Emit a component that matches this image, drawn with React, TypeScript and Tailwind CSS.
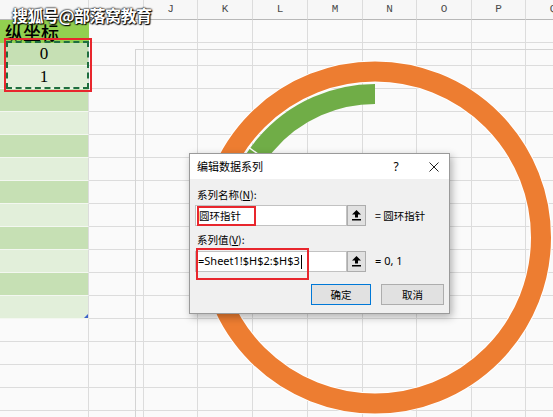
import React from "react";

const LETTERS = ["", "", "J", "K", "L", "M", "N", "O", "P", "Q"];

function UploadIcon() {
  return (
    <svg width="9" height="11" viewBox="0 0 9 11">
      <path d="M4.5 0 L9 4.5 H6 V7.5 H3 V4.5 H0 Z" fill="#000" />
      <rect x="0" y="9" width="9" height="1.5" fill="#000" />
    </svg>
  );
}

function greenClass(k: number) {
  if (k === 0) return "bg-[#92d050] border-r border-b border-[#92d050]";
  if (k > 12) return "border-r border-b border-[#dcdcdc]";
  return k % 2 === 1
    ? "bg-[#c6e0b4] border-r border-b border-r-[#dcdcdc] border-b-[#f3f7f0]"
    : "bg-[#e2efda] border-r border-b border-r-[#dcdcdc] border-b-[#f3f7f0]";
}

export default function App() {
  const rows = Array.from({ length: 18 }, (_, i) => i);
  const cx = 375;
  const cy = 237.5;
  const rg = 143.5;
  const a = (100 * Math.PI) / 180;
  const ex = cx - rg * Math.sin(a);
  const ey = cy - rg * Math.cos(a);
  const s = (54.5 * Math.PI) / 180;
  return (
    <div className="relative w-[553px] h-[417px] overflow-hidden bg-[#fafafa] font-['Noto_Sans','Noto_Sans_CJK_SC',sans-serif]">
      <div className="grid w-[581px] grid-cols-[89px_55px_54px_55px_55px_55px_54px_55px_54px_55px]">
        {LETTERS.map((l, i) => (
          <div
            key={"h" + i}
            className="h-[20px] border-r border-b border-r-[#dcdcdc] border-b-[#b8b8b8] bg-[#f7f7f7] flex items-center justify-center text-[11px] text-[#4a4a4a] font-['Liberation_Mono',monospace]"
          >
            {l}
          </div>
        ))}
        {rows.map((k) =>
          LETTERS.map((_, i) => (
            <div
              key={k + "-" + i}
              className={
                i === 0
                  ? "h-[23px] flex items-end justify-center " + greenClass(k)
                  : "h-[23px] border-r border-b border-[#dcdcdc]"
              }
            >
              {i === 0 && k === 0 && (
                <span className="w-full pl-[5px] text-[18px] leading-[20px] font-medium text-black font-['Noto_Sans_CJK_SC',sans-serif]">
                  纵坐标
                </span>
              )}
              {i === 0 && (k === 1 || k === 2) && (
                <span className="pb-[2px] text-[17px] leading-[19px] text-black font-['Liberation_Serif',serif]">
                  {k === 1 ? "0" : "1"}
                </span>
              )}
            </div>
          ))
        )}
      </div>

      {/* table resize handle */}
      <div className="absolute left-[84px] top-[314px] w-0 h-0 border-l-[4px] border-l-transparent border-b-[4px] border-b-[#3d63c9]" />

      {/* chart area border */}
      <div className="absolute left-[135px] top-[49px] w-[500px] h-[500px] border border-[#d4d4d4]" />

      {/* doughnut chart */}
      <svg className="absolute left-0 top-0" width="553" height="417" viewBox="0 0 553 417">
        <circle cx={cx} cy={cy} r={166} fill="none" stroke="#ffffff" strokeWidth={22} />
        <circle cx={cx} cy={cy} r={166} fill="none" stroke="#ed7d31" strokeWidth={20} />
        <path
          d={`M ${cx} ${cy - rg} A ${rg} ${rg} 0 0 0 ${ex} ${ey}`}
          fill="none"
          stroke="#70ad47"
          strokeWidth={20}
        />
        <line
          x1={cx - 155 * Math.sin(s)}
          y1={cy - 155 * Math.cos(s)}
          x2={cx - 132 * Math.sin(s)}
          y2={cy - 132 * Math.cos(s)}
          stroke="#ffffff"
          strokeWidth={1.5}
        />
      </svg>

      {/* marching ants selection */}
      <div className="absolute left-[6px] top-[41px] w-[83px] h-[48px] border-2 border-dashed border-[#1e6e3f]" />

      {/* watermark */}
      <div className="absolute left-[12px] top-[4px] text-[16px] leading-[22px] font-bold text-white tracking-[-0.5px] font-['Noto_Sans_CJK_SC',sans-serif] [text-shadow:0_0_2px_#000,0_0_2px_#000,1px_1px_1px_#000]">
        搜狐号@部落窝教育
      </div>

      {/* dialog */}
      <div className="absolute left-[189px] top-[153px] w-[261px] h-[161px] border border-[#9a9a9a] bg-[#f0f0f0] shadow-[2px_3px_8px_rgba(0,0,0,0.3)] flex flex-col text-[10.5px] text-black font-['Noto_Sans_CJK_SC',sans-serif]">
        <div className="h-[25px] bg-white flex items-center pl-[7px] text-[11px]">
          <span className="flex-1">编辑数据系列</span>
          <span className="w-[10px] text-center mr-[28px] text-[12px] font-['Noto_Sans',sans-serif]">?</span>
          <svg width="10" height="10" viewBox="0 0 10 10" className="mr-[10px]">
            <path d="M0.5 0.5 L9.5 9.5 M9.5 0.5 L0.5 9.5" stroke="#222" strokeWidth="1" />
          </svg>
        </div>
        <div className="flex flex-col px-[5px]">
          <div className="pt-[9px] pl-[2px] h-[23px] leading-[14px]">
            系列名称(<span className="underline">N</span>):
          </div>
          <div className="mt-[3px] flex items-center h-[21px]">
            <div className="w-[152px] h-[21px] bg-white border border-[#c2c2c2] flex items-center pl-[3px]">
              圆环指针
            </div>
            <div className="w-[19px] h-[21px] bg-[#e1e1e1] border border-[#adadad] flex items-center justify-center">
              <UploadIcon />
            </div>
            <span className="ml-[9px]">= 圆环指针</span>
          </div>
          <div className="mt-[7px] pl-[2px] h-[14px] leading-[14px]">
            系列值(<span className="underline">V</span>):
          </div>
          <div className="mt-[4px] flex items-center h-[21px]">
            <div className="w-[152px] h-[21px] bg-white border border-[#c2c2c2] flex items-center pl-[2px] text-[11px] font-['Noto_Sans',sans-serif]">
              =Sheet1!$H$2:$H$3
              <span className="ml-[1px] w-px h-[14px] bg-black" />
            </div>
            <div className="w-[19px] h-[21px] bg-[#e1e1e1] border border-[#adadad] flex items-center justify-center">
              <UploadIcon />
            </div>
            <span className="ml-[9px] text-[11px] font-['Noto_Sans',sans-serif]">= 0, 1</span>
          </div>
          <div className="mt-[12px] flex justify-end gap-[10px] pr-[0px]">
            <div className="w-[60px] h-[21px] bg-[#e1e1e1] border border-[#0078d7] flex items-center justify-center">
              确定
            </div>
            <div className="w-[63px] h-[21px] bg-[#e1e1e1] border border-[#adadad] flex items-center justify-center">
              取消
            </div>
          </div>
        </div>
      </div>

      {/* red annotation boxes */}
      <div className="absolute left-[4px] top-[38px] w-[88px] h-[54px] border-2 border-[#e8262d]" />
      <div className="absolute left-[197px] top-[206px] w-[59px] h-[20px] border-2 border-[#e8262d]" />
      <div className="absolute left-[196px] top-[248px] w-[113px] h-[32px] border-2 border-[#e8262d]" />
    </div>
  );
}
